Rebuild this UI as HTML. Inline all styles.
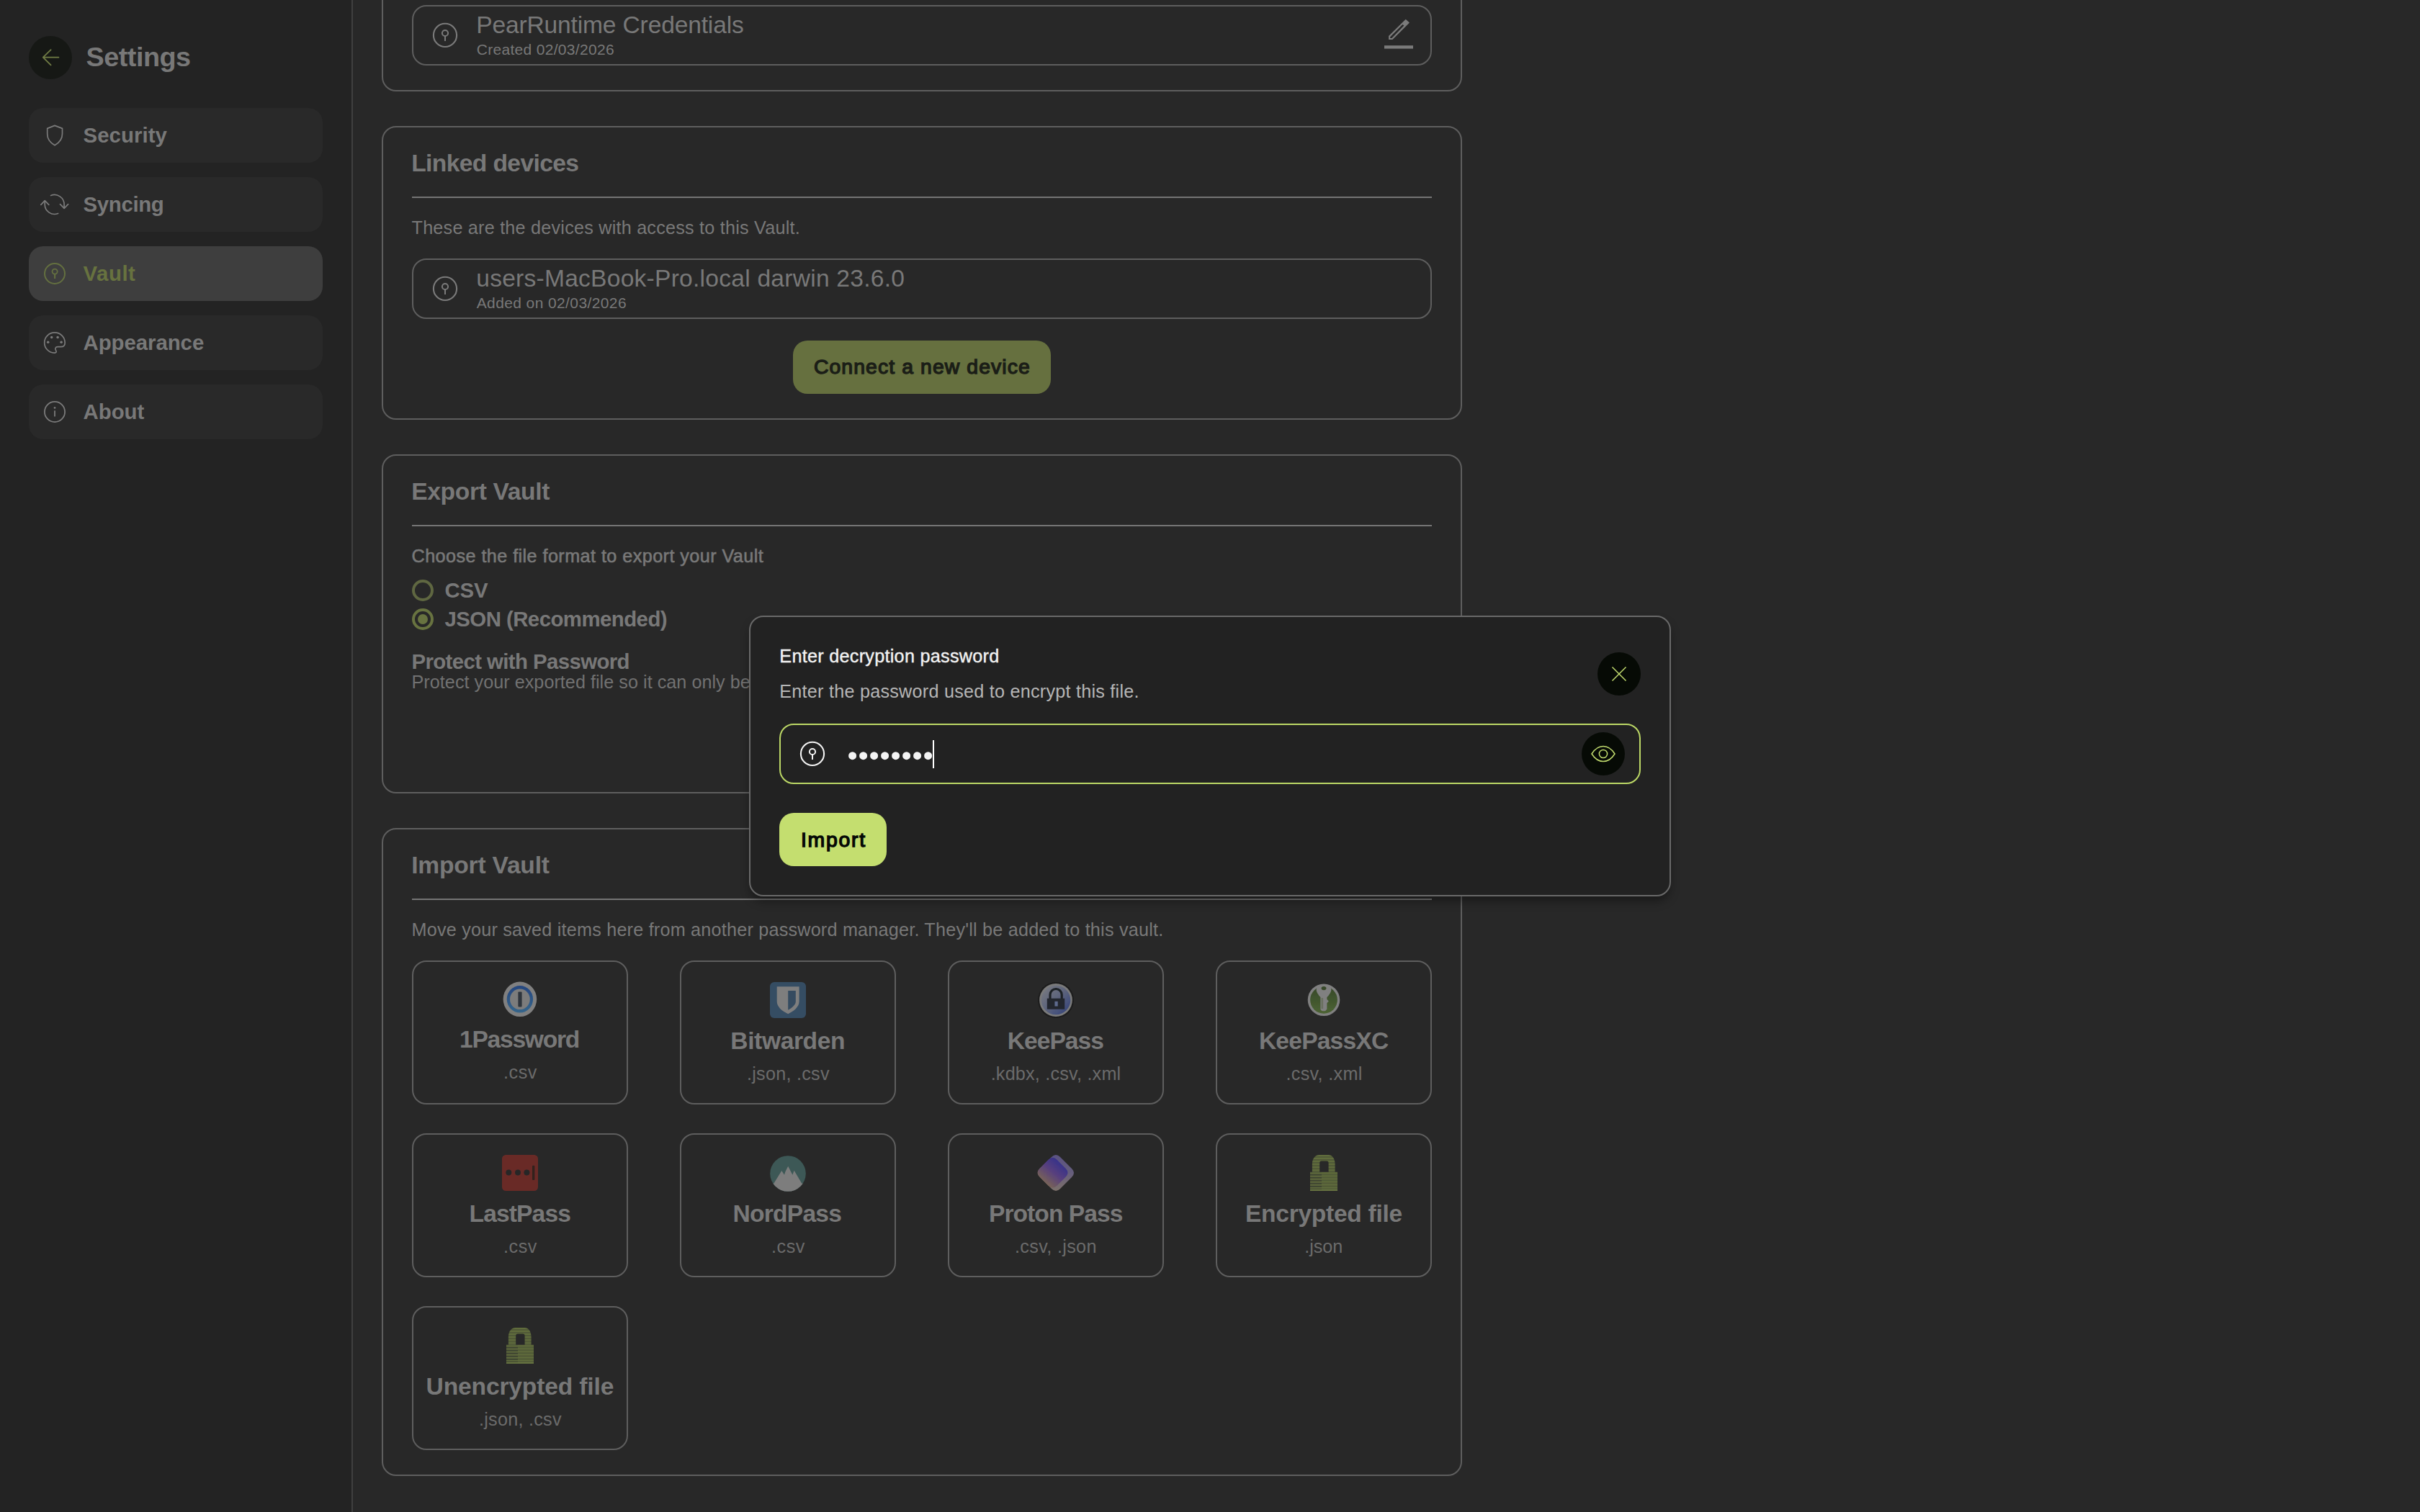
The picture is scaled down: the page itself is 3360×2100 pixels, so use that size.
<!DOCTYPE html>
<html><head><meta charset="utf-8"><title>PearPass</title>
<style>
*{margin:0;padding:0;box-sizing:border-box;}
html,body{width:3360px;height:2100px;background:#282828;}
body{overflow:hidden;}
body{position:relative;font-family:"Liberation Sans",sans-serif;}
.a{position:absolute;}
.t{position:absolute;line-height:1;white-space:nowrap;}
#side{left:0;top:0;width:488px;height:2100px;background:#232323;}
#sline{left:488px;top:0;width:2px;height:2100px;background:#404040;}
.nav{left:40px;width:408px;height:76px;border-radius:20px;background:#292929;}
.nav.on{background:#3e3e3e;}
.card{left:530px;width:1500px;border:2px solid #5e5e5e;border-radius:20px;}
.row{left:572px;width:1416px;height:84px;border:2px solid #5e5e5e;border-radius:20px;}
.hr{left:572px;width:1416px;height:2px;background:#757575;}
.tile{width:300px;height:200px;border:2px solid #5e5e5e;border-radius:20px;}
.btn{border-radius:20px;}
svg{position:absolute;overflow:visible;}
#modal{left:1040px;top:855px;width:1280px;height:390px;background:#222222;border:2px solid #696969;border-radius:20px;box-shadow:0 8px 14px -2px rgba(0,0,0,.4);}
</style></head>
<body>
<div class="a" id="side"></div>
<div class="a" id="sline"></div>
<div class="a" style="left:40px;top:50px;width:60px;height:60px;border-radius:50%;background:#161815"></div>
<svg style="left:36px;top:46px" width="68" height="68" viewBox="36 46 68 68"><path d="M70.6 69.1 L59.8 79.7 L70.6 90.3 M59.8 79.7 H81.4" fill="none" stroke="#707c45" stroke-width="1.8" stroke-linecap="round" stroke-linejoin="round"/></svg>
<div class="a nav" style="top:150px"></div>
<div class="a nav" style="top:246px"></div>
<div class="a nav on" style="top:342px"></div>
<div class="a nav" style="top:438px"></div>
<div class="a nav" style="top:534px"></div>
<!-- nav icons -->
<svg style="left:46px;top:160px" width="60" height="56" viewBox="46 160 60 56"><path d="M76 174.4 L86.5 178.4 V186 C86.5 194 81 199 76 201.8 C71 199 65.7 194 65.7 186 V178.4 Z" fill="none" stroke="#7b7b7b" stroke-width="1.7" stroke-linejoin="round"/></svg>
<svg style="left:46px;top:256px" width="60" height="56" viewBox="46 256 60 56"><g fill="none" stroke="#7b7b7b" stroke-width="1.7" stroke-linecap="round" stroke-linejoin="round"><path d="M70.6 271.5 A13.5 13.5 0 0 1 89.1 284 V288.8"/><path d="M83.5 283.7 L89.1 289.3 L94.6 283.7"/><path d="M62.2 279 V284 A13.5 13.5 0 0 0 80.6 296.5"/><path d="M56.8 284.3 L62.2 278.6 L67.8 284.3"/></g></svg>
<svg style="left:61px;top:365px" width="30" height="30" viewBox="0 0 30 30"><g fill="none" stroke="#647040"><circle cx="15" cy="15" r="14" stroke-width="2"/><circle cx="15.1" cy="12.1" r="3.55" stroke-width="1.8"/><path d="M15.1 15.6 V22" stroke-width="2"/></g></svg>
<svg style="left:46px;top:448px" width="60" height="56" viewBox="46 448 60 56"><path d="M76.1 461.9 A14.1 14.1 0 1 0 75.5 490.1 C78.2 490.3 78.7 488.6 77.7 486.9 C76 484.4 76.9 481.7 80.2 481.7 H84.5 C88.5 481.7 90.2 479 90.2 476 A14.1 14.1 0 0 0 76.1 461.9 Z" fill="none" stroke="#7b7b7b" stroke-width="1.7"/><g fill="#7b7b7b"><circle cx="71.7" cy="468.4" r="1.75"/><circle cx="80.1" cy="468.4" r="1.75"/><circle cx="66.7" cy="475.2" r="1.75"/><circle cx="85.1" cy="475.2" r="1.75"/></g></svg>
<svg style="left:61px;top:557px" width="30" height="30" viewBox="0 0 30 30"><g fill="none" stroke="#7b7b7b"><circle cx="15" cy="15" r="14.1" stroke-width="1.8"/><path d="M15 13.2 V21.6" stroke-width="1.8"/></g><circle cx="15" cy="9.4" r="1.3" fill="#7b7b7b"/></svg>

<!-- cards -->
<div class="a card" style="top:-100px;height:227px"></div>
<div class="a card" style="top:175px;height:408px"></div>
<div class="a card" style="top:631px;height:471px"></div>
<div class="a card" style="top:1150px;height:900px"></div>
<div class="a row" style="top:7px"></div>
<div class="a row" style="top:359px"></div>
<div class="a hr" style="top:273px"></div>
<div class="a hr" style="top:729px"></div>
<div class="a hr" style="top:1248px"></div>
<!-- key icons -->
<svg style="left:601px;top:32px" width="34" height="34" viewBox="0 0 34 34"><g fill="none" stroke="#7b7b7b"><circle cx="17" cy="16.9" r="16.1" stroke-width="2.1"/><circle cx="17" cy="14" r="4.1" stroke-width="2"/><path d="M17 18.1 V25" stroke-width="2"/></g></svg>
<svg style="left:601px;top:384px" width="34" height="34" viewBox="0 0 34 34"><g fill="none" stroke="#7b7b7b"><circle cx="17" cy="16.9" r="16.1" stroke-width="2.1"/><circle cx="17" cy="14" r="4.1" stroke-width="2"/><path d="M17 18.1 V25" stroke-width="2"/></g></svg>
<!-- edit icon -->
<svg style="left:1910px;top:16px" width="64" height="60" viewBox="1910 16 64 60"><path d="M1928.1 55.1 V50.1 L1951.7 26.7 L1957 31.5 L1933.4 55.1 Z M1930.2 53 V51.2 L1947.4 34 L1949.4 35.6 L1932.4 53 Z" fill="#7b7b7b" fill-rule="evenodd"/><rect x="1922" y="63.2" width="40" height="4.4" fill="#7b7b7b"/></svg>
<!-- connect button -->
<div class="a btn" style="left:1101px;top:473px;width:358px;height:74px;background:#66703f"></div>
<!-- radios -->
<div class="a" style="left:572px;top:805px;width:30px;height:30px;border-radius:50%;border:4px solid #5f6741"></div>
<div class="a" style="left:572px;top:845px;width:30px;height:30px;border-radius:50%;border:4px solid #687340"></div>
<div class="a" style="left:580px;top:853px;width:14px;height:14px;border-radius:50%;background:#687340"></div>
<!-- tiles -->
<div class="a tile" style="left:572px;top:1334px"></div>
<div class="a tile" style="left:944px;top:1334px"></div>
<div class="a tile" style="left:1316px;top:1334px"></div>
<div class="a tile" style="left:1688px;top:1334px"></div>
<div class="a tile" style="left:572px;top:1574px"></div>
<div class="a tile" style="left:944px;top:1574px"></div>
<div class="a tile" style="left:1316px;top:1574px"></div>
<div class="a tile" style="left:1688px;top:1574px"></div>
<div class="a tile" style="left:572px;top:1814px"></div>
<!--ICONS_START-->
<svg width="0" height="0" style="left:0;top:0"><defs>
<linearGradient id="g1p" x1="0" y1="0" x2="0" y2="1"><stop offset="0" stop-color="#26467f"/><stop offset="1" stop-color="#35658a"/></linearGradient>
<linearGradient id="gkp" x1="0.15" y1="0.15" x2="0.85" y2="0.85"><stop offset="0" stop-color="#72757f"/><stop offset="0.5" stop-color="#5c637c"/><stop offset="1" stop-color="#3c4a7a"/></linearGradient>
<linearGradient id="gxc" x1="0" y1="0" x2="0" y2="1"><stop offset="0" stop-color="#36482a"/><stop offset="1" stop-color="#4c6332"/></linearGradient>
<linearGradient id="gpb" x1="0" y1="0" x2="0" y2="1"><stop offset="0" stop-color="#5a5282"/><stop offset="0.5" stop-color="#665e7c"/><stop offset="1" stop-color="#7c706a"/></linearGradient>
<linearGradient id="gpf" gradientUnits="userSpaceOnUse" x1="33" y1="12" x2="9" y2="40"><stop offset="0" stop-color="#37328a"/><stop offset="0.45" stop-color="#573f7e"/><stop offset="1" stop-color="#7b6654"/></linearGradient>
<pattern id="st1" patternUnits="userSpaceOnUse" width="4" height="4.05" y="0.3"><rect width="4" height="2.1" fill="#626e3d"/><rect y="2.1" width="4" height="1.95" fill="#525d37"/></pattern>
<pattern id="st2" patternUnits="userSpaceOnUse" width="4" height="4.05" y="0.3"><rect width="4" height="2.1" fill="#5f6a3c"/><rect y="2.1" width="4" height="1.95" fill="#3e4430"/></pattern>
<filter id="b5"><feGaussianBlur stdDeviation="0.5"/></filter>
<filter id="b7"><feGaussianBlur stdDeviation="0.7"/></filter>
<clipPath id="cnp"><circle cx="25" cy="25" r="24.8"/></clipPath>
</defs></svg>
<!-- 1Password -->
<svg style="left:697px;top:1362px" width="50" height="52" viewBox="0 0 50 52" filter="url(#b5)"><ellipse cx="24.9" cy="25.8" rx="23.3" ry="24.2" fill="#808080"/><ellipse cx="24.9" cy="25.8" rx="18.2" ry="18.8" fill="url(#g1p)"/><ellipse cx="24.9" cy="25.8" rx="13.9" ry="14.3" fill="#7c7c7c"/><rect x="22.4" y="15.6" width="5.2" height="20.8" rx="0.8" fill="#2f353c"/></svg>
<!-- Bitwarden -->
<svg style="left:1069px;top:1364px" width="50" height="50" viewBox="0 0 50 50" filter="url(#b5)"><rect width="50" height="50" rx="6" fill="#364d63"/><path d="M9.7 6.2 H40.6 V27 C40.6 35 32 41 25.2 44.2 C18 41 9.7 35 9.7 27 Z" fill="#7e7e7e"/><path d="M25.2 11.9 H35.8 V27 C35.8 31.5 31 35.5 25.2 38.7 Z" fill="#344b60"/></svg>
<!-- KeePass -->
<svg style="left:1441px;top:1364px" width="50" height="50" viewBox="0 0 50 50" filter="url(#b7)"><circle cx="25" cy="25" r="25" fill="#1b1b1b"/><circle cx="25" cy="25" r="22.9" fill="#7a7a7a"/><circle cx="25" cy="25" r="20.3" fill="url(#gkp)"/><path d="M17 23.5 V17.6 A8.1 8.1 0 0 1 33.2 17.6 V23.5" fill="none" stroke="#1e2025" stroke-width="3.2"/><rect x="12.8" y="22.7" width="24.4" height="15" fill="#23262e"/><rect x="23.4" y="26.8" width="4.3" height="6.8" fill="#5d6a8e"/></svg>
<!-- KeePassXC -->
<svg style="left:1813px;top:1364px" width="50" height="50" viewBox="0 0 50 50" filter="url(#b7)"><circle cx="25" cy="24.8" r="22.3" fill="#808080"/><circle cx="25" cy="24.8" r="18.9" fill="url(#gxc)"/><path d="M14.6 11 Q14.8 6 19 4.4 H31 Q35.2 6 35.4 11 Q34.5 16 29.4 21 L29.4 24 L31.8 26.6 L29.4 29.2 L29.4 37.5 Q27.4 40.8 25 40.2 Q21.2 40.8 20.4 37.5 V21 Q15.5 16 14.6 11 Z" fill="#808080"/><ellipse cx="25" cy="8.6" rx="3.4" ry="2.6" fill="#39492b"/><rect x="21.5" y="22" width="2.6" height="15" fill="#6a7060"/></svg>
<!-- LastPass -->
<svg style="left:697px;top:1604px" width="50" height="50" viewBox="0 0 50 50" filter="url(#b5)"><rect width="50" height="50" rx="5.5" fill="#692b28"/><circle cx="9.3" cy="24.4" r="4" fill="#282626"/><circle cx="22" cy="24.4" r="4" fill="#282626"/><circle cx="34.4" cy="24.4" r="4" fill="#282626"/><rect x="42" y="14.8" width="3.3" height="20.2" rx="1" fill="#30211f"/></svg>
<!-- NordPass -->
<svg style="left:1069px;top:1604.5px" width="50" height="50" viewBox="0 0 50 50" filter="url(#b5)"><g clip-path="url(#cnp)"><rect width="50" height="50" fill="#3c5856"/><path d="M0 50 V38.8 H5.3 L16.3 21 L20 26.7 L21.3 22.5 L25.2 14.8 L29.2 22.5 L31.4 26.7 L33.6 20.7 L44.3 38.8 H50 V50 Z" fill="#7d7d7d"/></g></svg>
<!-- Proton Pass -->
<svg style="left:1441px;top:1604px" width="50" height="50" viewBox="0 0 50 50" filter="url(#b7)"><path d="M19 3 Q25 -3 31 3 L47 19 Q53 25 47 31 L31 47 Q25 53 19 47 L3 31 Q-3 25 3 19 Z" fill="url(#gpb)"/><path d="M14.5 6.8 Q20.5 0.8 26.5 6.8 L38.5 18.8 Q44.5 24.8 38.5 30.8 L26.5 42.8 Q20.5 48.8 14.5 42.8 L2.5 30.8 Q-3.5 24.8 2.5 18.8 Z" fill="url(#gpf)"/></svg>
<!-- locks -->
<svg style="left:1819px;top:1604px" width="38" height="50" viewBox="0 0 38 50" filter="url(#b5)"><path d="M0 23.7 H2.9 V12.5 C2.9 4.5 8 0 12.5 0 H25.5 C30 0 34.6 4.5 34.6 12.5 V23.7 H38 V50 H0 Z M13.2 23.7 H25.6 V11.2 Q25.6 8.6 23 8.6 H15.8 Q13.2 8.6 13.2 11.2 Z" fill="url(#st1)" fill-rule="evenodd"/><rect x="0" y="24.5" width="16" height="25.5" fill="url(#st2)"/><rect x="0" y="48" width="38" height="2" fill="#66733f"/></svg>
<svg style="left:703px;top:1844px" width="38" height="50" viewBox="0 0 38 50" filter="url(#b5)"><path d="M0 23.7 H2.9 V12.5 C2.9 4.5 8 0 12.5 0 H25.5 C30 0 34.6 4.5 34.6 12.5 V23.7 H38 V50 H0 Z M13.2 23.7 H25.6 V11.2 Q25.6 8.6 23 8.6 H15.8 Q13.2 8.6 13.2 11.2 Z" fill="url(#st1)" fill-rule="evenodd"/><rect x="0" y="24.5" width="16" height="25.5" fill="url(#st2)"/><rect x="0" y="48" width="38" height="2" fill="#66733f"/></svg>
<!--ICONS_END-->
<div class="t" id="t0" style="top:60.60px;font-size:37.8px;font-weight:700;color:#787878;left:119.56px;letter-spacing:-0.513px;"><span>Settings</span></div>
<div class="t" id="t1" style="top:173.31px;font-size:29.4px;font-weight:700;color:#787878;left:115.58px;letter-spacing:0.039px;"><span>Security</span></div>
<div class="t" id="t2" style="top:269.31px;font-size:29.4px;font-weight:700;color:#787878;left:115.58px;letter-spacing:-0.361px;"><span>Syncing</span></div>
<div class="t" id="t3" style="top:365.31px;font-size:29.4px;font-weight:700;color:#67723f;left:115.58px;letter-spacing:0.506px;"><span>Vault</span></div>
<div class="t" id="t4" style="top:461.31px;font-size:29.4px;font-weight:700;color:#787878;left:115.58px;letter-spacing:-0.066px;"><span>Appearance</span></div>
<div class="t" id="t5" style="top:557.31px;font-size:29.4px;font-weight:700;color:#787878;left:115.58px;letter-spacing:-0.054px;"><span>About</span></div>
<div class="t" id="t6" style="top:17.76px;font-size:33.6px;font-weight:400;color:#787878;left:661.22px;letter-spacing:-0.164px;"><span>PearRuntime Credentials</span></div>
<div class="t" id="t7" style="top:58.42px;font-size:21.0px;font-weight:400;color:#787878;left:661.70px;letter-spacing:0.308px;"><span>Created 02/03/2026</span></div>
<div class="t" id="t8" style="top:209.76px;font-size:33.6px;font-weight:700;color:#787878;left:571.22px;letter-spacing:-0.617px;"><span>Linked devices</span></div>
<div class="t" id="t9" style="top:303.67px;font-size:25.2px;font-weight:400;color:#787878;left:571.54px;letter-spacing:0.222px;"><span>These are the devices with access to this Vault.</span></div>
<div class="t" id="t10" style="top:369.86px;font-size:33.6px;font-weight:400;color:#787878;left:661.22px;letter-spacing:0.242px;"><span>users-MacBook-Pro.local darwin 23.6.0</span></div>
<div class="t" id="t11" style="top:410.22px;font-size:21.0px;font-weight:400;color:#787878;left:661.70px;letter-spacing:0.391px;"><span>Added on 02/03/2026</span></div>
<div class="t" id="t12" style="top:495.40px;font-size:28.35px;font-weight:400;color:#1b1e17;left:1129.92px;-webkit-text-stroke:1.4px #1b1e17;letter-spacing:1.105px;"><span>Connect a new device</span></div>
<div class="t" id="t13" style="top:665.86px;font-size:33.6px;font-weight:700;color:#787878;left:571.22px;letter-spacing:-0.335px;"><span>Export Vault</span></div>
<div class="t" id="t14" style="top:760.07px;font-size:25.2px;font-weight:400;color:#787878;left:571.54px;-webkit-text-stroke:0.6px #787878;letter-spacing:0.434px;"><span>Choose the file format to export your Vault</span></div>
<div class="t" id="t15" style="top:804.61px;font-size:29.4px;font-weight:700;color:#787878;left:617.48px;letter-spacing:-0.189px;"><span>CSV</span></div>
<div class="t" id="t16" style="top:845.11px;font-size:29.4px;font-weight:700;color:#787878;left:617.48px;letter-spacing:-0.548px;"><span>JSON (Recommended)</span></div>
<div class="t" id="t17" style="top:903.91px;font-size:29.4px;font-weight:700;color:#787878;left:571.38px;letter-spacing:-0.602px;"><span>Protect with Password</span></div>
<div class="t" id="t18" style="top:934.97px;font-size:25.2px;font-weight:400;color:#717171;left:571.54px;letter-spacing:0.029px;"><span>Protect your exported file so it can only be opened with the password you set.</span></div>
<div class="t" id="t19" style="top:1184.86px;font-size:33.6px;font-weight:700;color:#787878;left:571.22px;letter-spacing:-0.208px;"><span>Import Vault</span></div>
<div class="t" id="t20" style="top:1279.27px;font-size:25.2px;font-weight:400;color:#787878;left:571.54px;letter-spacing:0.212px;"><span>Move your saved items here from another password manager. They'll be added to this vault.</span></div>
<div class="t" id="t21" style="top:1427.16px;font-size:33.6px;font-weight:700;color:#787878;left:638.02px;letter-spacing:-1.259px;"><span>1Password</span></div>
<div class="t" id="t22" style="top:1477.17px;font-size:25.2px;font-weight:400;color:#6b6b6b;left:699.04px;letter-spacing:0.533px;"><span>.csv</span></div>
<div class="t" id="t23" style="top:1429.16px;font-size:33.6px;font-weight:700;color:#787878;left:1014.32px;letter-spacing:-0.386px;"><span>Bitwarden</span></div>
<div class="t" id="t24" style="top:1479.17px;font-size:25.2px;font-weight:400;color:#6b6b6b;left:1036.94px;letter-spacing:0.260px;"><span>.json, .csv</span></div>
<div class="t" id="t25" style="top:1429.16px;font-size:33.6px;font-weight:700;color:#787878;left:1398.72px;letter-spacing:-0.965px;"><span>KeePass</span></div>
<div class="t" id="t26" style="top:1479.17px;font-size:25.2px;font-weight:400;color:#6b6b6b;left:1375.64px;letter-spacing:0.206px;"><span>.kdbx, .csv, .xml</span></div>
<div class="t" id="t27" style="top:1429.16px;font-size:33.6px;font-weight:700;color:#787878;left:1747.92px;letter-spacing:-0.791px;"><span>KeePassXC</span></div>
<div class="t" id="t28" style="top:1479.17px;font-size:25.2px;font-weight:400;color:#6b6b6b;left:1785.44px;letter-spacing:0.311px;"><span>.csv, .xml</span></div>
<div class="t" id="t29" style="top:1669.16px;font-size:33.6px;font-weight:700;color:#787878;left:651.62px;letter-spacing:-0.890px;"><span>LastPass</span></div>
<div class="t" id="t30" style="top:1719.17px;font-size:25.2px;font-weight:400;color:#6b6b6b;left:699.04px;letter-spacing:0.533px;"><span>.csv</span></div>
<div class="t" id="t31" style="top:1669.16px;font-size:33.6px;font-weight:700;color:#787878;left:1017.52px;letter-spacing:-0.761px;"><span>NordPass</span></div>
<div class="t" id="t32" style="top:1719.17px;font-size:25.2px;font-weight:400;color:#6b6b6b;left:1071.04px;letter-spacing:0.533px;"><span>.csv</span></div>
<div class="t" id="t33" style="top:1669.16px;font-size:33.6px;font-weight:700;color:#787878;left:1373.02px;letter-spacing:-0.960px;"><span>Proton Pass</span></div>
<div class="t" id="t34" style="top:1719.17px;font-size:25.2px;font-weight:400;color:#6b6b6b;left:1409.04px;letter-spacing:0.327px;"><span>.csv, .json</span></div>
<div class="t" id="t35" style="top:1669.16px;font-size:33.6px;font-weight:700;color:#787878;left:1729.02px;letter-spacing:-0.301px;"><span>Encrypted file</span></div>
<div class="t" id="t36" style="top:1719.17px;font-size:25.2px;font-weight:400;color:#6b6b6b;left:1811.24px;letter-spacing:-0.035px;"><span>.json</span></div>
<div class="t" id="t37" style="top:1909.16px;font-size:33.6px;font-weight:700;color:#787878;left:591.62px;letter-spacing:-0.157px;"><span>Unencrypted file</span></div>
<div class="t" id="t38" style="top:1959.17px;font-size:25.2px;font-weight:400;color:#6b6b6b;left:664.94px;letter-spacing:0.260px;"><span>.json, .csv</span></div>
<div class="a" id="modal"></div>
<div class="a" id="mc" style="left:0;top:0;width:0;height:0">
<div class="a" style="left:1082px;top:1005px;width:1196px;height:84px;border:2px solid #bcd866;border-radius:20px"></div>
<svg style="left:1111px;top:1030px" width="34" height="34" viewBox="0 0 34 34"><g fill="none" stroke="#f4f4f4"><circle cx="17" cy="16.9" r="16.1" stroke-width="2.1"/><circle cx="17" cy="14" r="4.1" stroke-width="2"/><path d="M17 18.1 V25" stroke-width="2"/></g></svg>
<svg style="left:1170px;top:1040px" width="130" height="20" viewBox="0 0 130 20"><g fill="#f4f4f4"><circle cx="13.6" cy="9.7" r="5.5"/><circle cx="28.6" cy="9.7" r="5.5"/><circle cx="43.6" cy="9.7" r="5.5"/><circle cx="58.6" cy="9.7" r="5.5"/><circle cx="73.6" cy="9.7" r="5.5"/><circle cx="88.6" cy="9.7" r="5.5"/><circle cx="103.6" cy="9.7" r="5.5"/><circle cx="118.6" cy="9.7" r="5.5"/></g></svg>
<div class="a" style="left:1295px;top:1028px;width:2px;height:39px;background:#fff"></div>
<div class="a" style="left:2218px;top:906px;width:60px;height:60px;border-radius:50%;background:#060a05"></div>
<svg style="left:2238px;top:926px" width="20" height="20" viewBox="0 0 20 20"><path d="M0.5 0.5 L19.5 19.5 M19.5 0.5 L0.5 19.5" stroke="#c2dc6e" stroke-width="1.5" fill="none"/></svg>
<div class="a" style="left:2196px;top:1017px;width:60px;height:60px;border-radius:50%;background:#060a05"></div>
<svg style="left:2209px;top:1035px" width="34" height="24" viewBox="0 0 34 24"><g fill="none" stroke="#c2dc6e" stroke-width="1.5"><path d="M1 12 C6 4 11 1.5 17 1.5 C23 1.5 28 4 33 12 C28 20 23 22.5 17 22.5 C11 22.5 6 20 1 12 Z"/><circle cx="17" cy="12" r="5.6"/></g></svg>
<div class="a btn" style="left:1082px;top:1129px;width:149px;height:74px;background:#c4de6f"></div>
<div class="t" id="t39" style="top:898.77px;font-size:25.2px;font-weight:400;color:#f2f2f2;left:1082.34px;-webkit-text-stroke:0.4px #f2f2f2;letter-spacing:0.278px;"><span>Enter decryption password</span></div>
<div class="t" id="t40" style="top:947.97px;font-size:25.2px;font-weight:400;color:#b6b6b6;left:1082.34px;letter-spacing:0.240px;"><span>Enter the password used to encrypt this file.</span></div>
<div class="t" id="t41" style="top:1151.80px;font-size:28.35px;font-weight:400;color:#050805;left:1111.92px;-webkit-text-stroke:1.4px #050805;letter-spacing:1.792px;"><span>Import</span></div>
</div>
<script>(function(){try{var d=window.devicePixelRatio||1,w=window.innerWidth||0;if(d>1.01&&Math.abs(w*d-3360)<6){document.documentElement.style.zoom=(1/d);}}catch(e){}})();</script>
</body></html>
